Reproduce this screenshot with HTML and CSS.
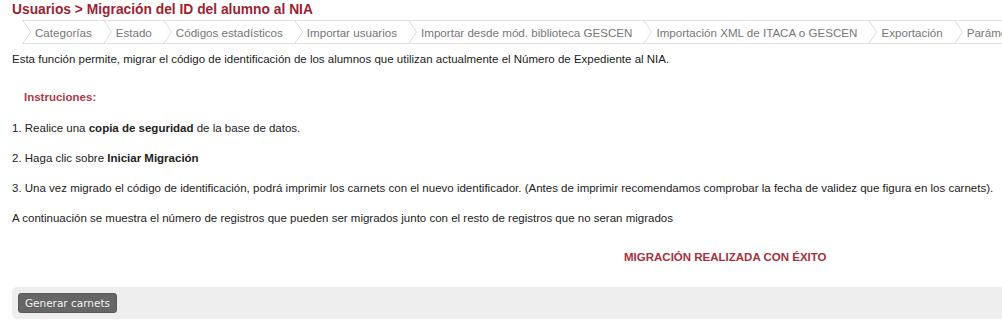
FILE: index.html
```html
<!DOCTYPE html>
<html lang="es">
<head>
<meta charset="utf-8">
<title>Migración del ID del alumno al NIA</title>
<link rel="stylesheet" href="styles.css">
</head>
<body>
<div class="page">
  <h1 class="title">Usuarios &gt; Migración del ID del alumno al NIA</h1>
  <nav class="crumbs">
    <a class="crumb"><svg class="chev" viewBox="0 0 9 24"><polyline points="0.5,0 8.5,12 0.5,24"/></svg><span>Categorías</span></a>
    <a class="crumb"><svg class="chev" viewBox="0 0 9 24"><polyline points="0.5,0 8.5,12 0.5,24"/></svg><span>Estado</span></a>
    <a class="crumb"><svg class="chev" viewBox="0 0 9 24"><polyline points="0.5,0 8.5,12 0.5,24"/></svg><span>Códigos estadísticos</span></a>
    <a class="crumb"><svg class="chev" viewBox="0 0 9 24"><polyline points="0.5,0 8.5,12 0.5,24"/></svg><span>Importar usuarios</span></a>
    <a class="crumb"><svg class="chev" viewBox="0 0 9 24"><polyline points="0.5,0 8.5,12 0.5,24"/></svg><span>Importar desde mód. biblioteca GESCEN</span></a>
    <a class="crumb"><svg class="chev" viewBox="0 0 9 24"><polyline points="0.5,0 8.5,12 0.5,24"/></svg><span>Importación XML de ITACA o GESCEN</span></a>
    <a class="crumb"><svg class="chev" viewBox="0 0 9 24"><polyline points="0.5,0 8.5,12 0.5,24"/></svg><span>Exportación</span></a>
    <a class="crumb"><svg class="chev" viewBox="0 0 9 24"><polyline points="0.5,0 8.5,12 0.5,24"/></svg><span>Parámetros</span></a>
  </nav>
  <div class="content">
    <p class="intro">Esta función permite, migrar el código de identificación de los alumnos que utilizan actualmente el Número de Expediente al NIA.</p>
    <p class="instr">Instruciones:</p>
    <p class="line line-first">1. Realice una <b>copia de seguridad</b> de la base de datos.</p>
    <p class="line">2. Haga clic sobre <b>Iniciar Migración</b></p>
    <p class="line">3. Una vez migrado el código de identificación, podrá imprimir los carnets con el nuevo identificador. (Antes de imprimir recomendamos comprobar la fecha de validez que figura en los carnets).</p>
    <p class="line">A continuación se muestra el número de registros que pueden ser migrados junto con el resto de registros que no seran migrados</p>
    <p class="success">MIGRACIÓN REALIZADA CON ÉXITO</p>
    <div class="actions">
      <button class="btn" type="button">Generar carnets</button>
    </div>
  </div>
</div>
</body>
</html>
```
FILE: styles.css
```css
html, body {
  margin: 0;
  padding: 0;
  background: #fff;
  overflow: hidden;
}
body {
  font-family: "Liberation Sans", Arial, sans-serif;
  color: #222;
  width: 1002px;
}
.page {
  white-space: nowrap;
  padding-left: 12px;
}
.title {
  margin: 0;
  padding-top: 1px;
  font-size: 13.8px;
  line-height: 18px;
  font-weight: bold;
  color: #9e1f32;
}
.crumbs {
  display: flex;
  margin-left: 10px;
  margin-top: 1px;
  height: 22px;
  border-top: 1px solid #e3e3e3;
  border-bottom: 1px solid #e3e3e3;
  width: 2000px;
}
.crumb {
  flex: none;
  display: flex;
  align-items: center;
  color: #777;
  font-size: 11.6px;
  text-decoration: none;
}
.chev {
  width: 9px;
  height: 24px;
  margin-top: -1px;
  margin-bottom: -1px;
  flex: none;
}
.chev polyline {
  fill: none;
  stroke: #dcdcdc;
  stroke-width: 1;
}
.crumb span {
  padding-left: 4px;
  padding-right: 11px;
}
.content {
  font-size: 11.5px;
  line-height: 13px;
}
.content p {
  margin: 0;
}
.intro {
  padding-top: 9px;
}
.instr {
  margin-top: 25px !important;
  padding-left: 12px;
  font-weight: bold;
  color: #b03a48;
}
.line {
  margin-top: 17px !important;
}
.line-first {
  margin-top: 18px !important;
}
.success {
  margin-top: 26px !important;
  padding-left: 612px;
  font-weight: bold;
  color: #a8313a;
}
.actions {
  margin-top: 23px;
  height: 32px;
  background: #eeeeee;
  border-radius: 5px 0 0 5px;
  display: flex;
  align-items: center;
  padding-left: 6px;
}
.btn {
  font-family: "DejaVu Sans", Verdana, sans-serif;
  font-size: 10.5px;
  color: #f0f0f0;
  background: #666;
  border: 1px solid #5a5a5a;
  border-radius: 3px;
  height: 20px;
  width: 99px;
  padding: 0;
  line-height: 18px;
}
```
